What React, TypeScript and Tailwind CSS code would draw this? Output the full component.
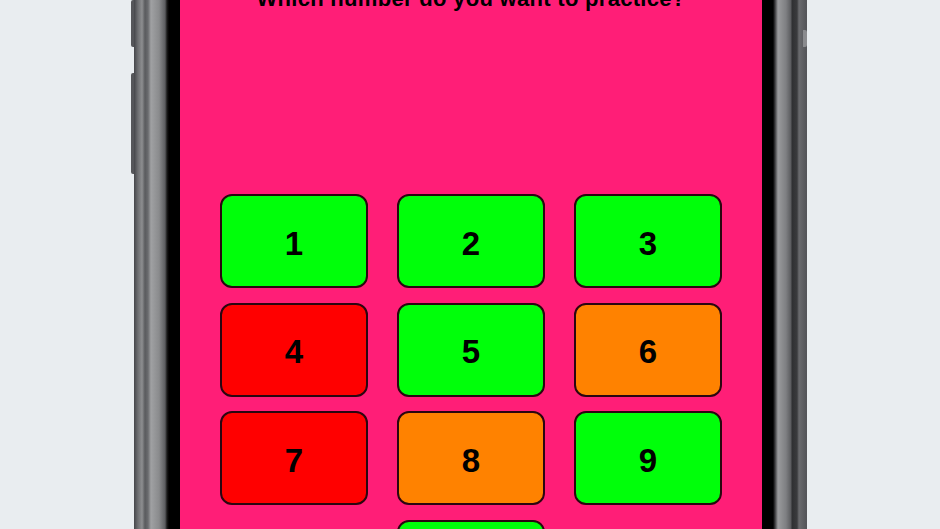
type Tile = { n: string; color: string; col?: string }

const tiles: Tile[] = [
  { n: '1', color: 'bg-[#00ff0a]' },
  { n: '2', color: 'bg-[#00ff0a]' },
  { n: '3', color: 'bg-[#00ff0a]' },
  { n: '4', color: 'bg-[#ff0000]' },
  { n: '5', color: 'bg-[#00ff0a]' },
  { n: '6', color: 'bg-[#ff8200]' },
  { n: '7', color: 'bg-[#ff0000]' },
  { n: '8', color: 'bg-[#ff8200]' },
  { n: '9', color: 'bg-[#00ff0a]' },
  { n: '0', color: 'bg-[#00ff0a]', col: 'col-start-2' },
]

function NumberTile({ tile }: { tile: Tile }) {
  return (
    <button
      className={`${tile.color} ${tile.col ?? ''} h-[94px] pt-[4px] rounded-[12px] border-2 border-[#2a0610] flex items-center justify-center text-[33px] font-bold leading-none text-black`}
    >
      {tile.n}
    </button>
  )
}

export default function App() {
  return (
    <div className="w-[940px] h-[529px] overflow-hidden bg-[#e9edf0] flex font-['Liberation_Sans',sans-serif]">
      <div className="ml-[131px] flex h-[529px]">
        {/* left side buttons */}
        <div className="w-[3px] flex flex-col">
          <div className="h-[47px] bg-[#55565a] rounded-l-[2px]" />
          <div className="h-[26px]" />
          <div className="h-[101px] bg-[#55565a] rounded-l-[2px]" />
        </div>
        {/* left frame */}
        <div className="w-[46px] bg-[linear-gradient(to_right,#45464a_0px,#6e6f72_4px,#8d8e90_8px,#5a5b5e_11px,#6a6b6e_14px,#a0a1a3_17px,#8a8b8d_25px,#5d5e61_31px,#1a1a1a_33px,#000_35px,#000_46px)]" />

        {/* screen */}
        <div className="w-[582px] bg-[#ff1e77] flex flex-col items-center">
          <p className="-mt-[12px] text-[22px] leading-[22px] font-bold text-black tracking-[0.3px]">
            Which number do you want to practice?
          </p>
          <div className="mt-[184px] grid grid-cols-[148px_148px_148px] gap-x-[29px] gap-y-[14.5px]">
            {tiles.map((t) => (
              <NumberTile key={t.n} tile={t} />
            ))}
          </div>
        </div>

        {/* right frame */}
        <div className="relative w-[45px] bg-[linear-gradient(to_right,#000_0px,#000_11px,#3a3a3c_13px,#9a9b9d_16px,#7e7f82_24px,#5a5b5e_29px,#2f3032_30px,#3a3b3d_35px,#6a6b6e_37px,#55565a_44px)]">
          <div className="absolute right-0 top-[30px] h-[17px] w-[4px] bg-[#8a8b8e] rounded-r-[2px]" />
        </div>
      </div>
    </div>
  )
}
